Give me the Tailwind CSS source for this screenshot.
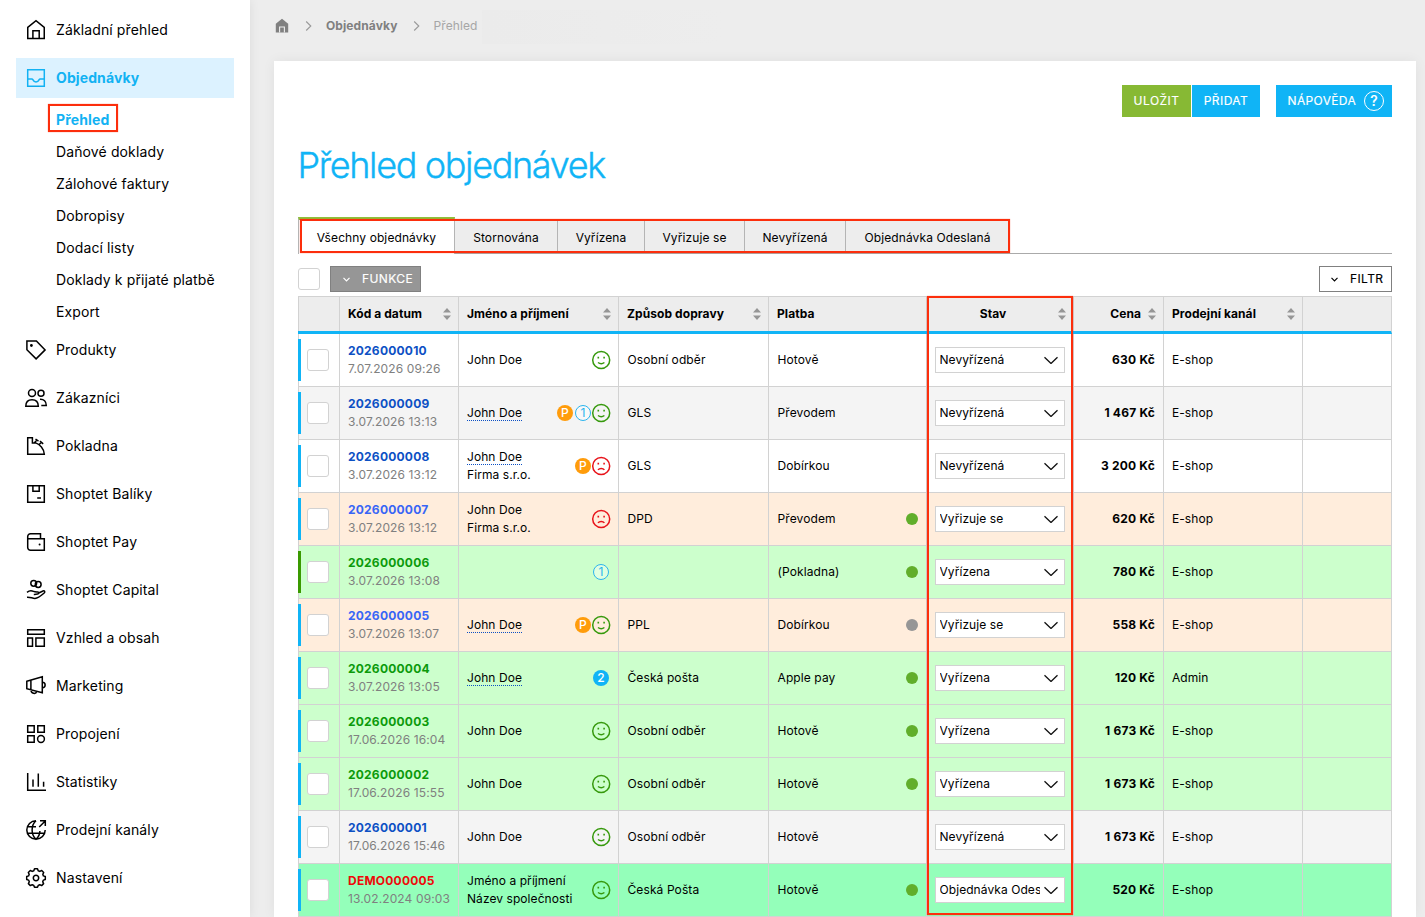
<!DOCTYPE html>
<html lang="cs">
<head>
    <meta charset="UTF-8">
    <meta name="viewport" content="width=device-width, initial-scale=1.0">
    <title>Přehled objednávek</title>
    <script src="https://cdn.jsdelivr.net/npm/@tailwindcss/browser@4"></script>
</head>
<body class="font-['Inter',sans-serif] text-black bg-[#ededed]">
<div class="relative flex w-[1425px] h-[917px] overflow-hidden">

    <!-- Menu -->
    <aside class="relative w-[250px] shrink-0 bg-white px-4 pt-[10px] text-sm tracking-[0.12px] shadow-[0_0_10px_rgba(0,0,0,0.08)]">
        <a class="flex items-center h-10 mb-2 pl-2 gap-2">
            <svg class="size-6" viewBox="0 0 24 24" fill="none" stroke="currentColor" stroke-width="1.5"><path d="M3.75 9.3 12 2.6l8.25 6.7v11.2H3.75zM8.9 20.5v-7.7h6.3v7.7"/></svg>
            <span>Základní přehled</span>
        </a>
        <a class="flex items-center h-10 pl-2 gap-2 bg-[#dcf2ff] text-[#12b2f3] font-bold tracking-[0.1px]">
            <svg class="size-6" viewBox="0 0 24 24" fill="none" stroke="currentColor" stroke-width="1.5"><path d="M3.7 3.7h16.6v16.6H3.7zM3.7 12.9h4.1c.7 0 .9.4 1.2 1 .5 1.2 1.5 2 3 2s2.5-.8 3-2c.3-.6.5-1 1.2-1h4.1"/></svg>
            <span>Objednávky</span>
        </a>
        <nav class="flex flex-col pl-10 mt-[6px] mb-[2px]">
            <a class="relative flex items-center h-8 text-[#12b2f3] font-bold tracking-[0.15px]">Přehled
                <span class="absolute -left-2 top-0 w-[70px] h-[28px] border-2 border-[#fc2e0c] shadow-[0_0_1px_rgba(252,46,12,0.6)]"></span>
            </a>
            <a class="flex items-center h-8">Daňové doklady</a>
            <a class="flex items-center h-8">Zálohové faktury</a>
            <a class="flex items-center h-8">Dobropisy</a>
            <a class="flex items-center h-8">Dodací listy</a>
            <a class="flex items-center h-8 whitespace-nowrap">Doklady k přijaté platbě</a>
            <a class="flex items-center h-8">Export</a>
        </nav>
        <div class="flex flex-col gap-2">
            <a class="flex items-center h-10 pl-2 gap-2">
                <svg class="size-6" viewBox="0 0 24 24" fill="none" stroke="currentColor" stroke-width="1.5"><path d="M2.9 2.9h9.5l8.7 9-9 9-9.2-9.2z"/><circle cx="7.4" cy="7.5" r="1.4" fill="currentColor" stroke="none"/></svg>
                <span>Produkty</span>
            </a>
            <a class="flex items-center h-10 pl-2 gap-2">
                <svg class="size-6" viewBox="0 0 24 24" fill="none" stroke="currentColor" stroke-width="1.5"><circle cx="8" cy="7" r="3.5"/><circle cx="17" cy="7.3" r="3"/><path d="M1.8 20.2c0-4 2.4-6.5 6.2-6.5s6.3 2.5 6.3 6.5zM16 13.2c3.9-.2 6.3 2.1 6.3 6.2h-5"/></svg>
                <span>Zákazníci</span>
            </a>
            <a class="flex items-center h-10 pl-2 gap-2">
                <svg class="size-6" viewBox="0 0 24 24" fill="none" stroke="currentColor" stroke-width="1.5"><path d="M3.7 3.7h4.7v5.2h3.3c4 1.4 8.4 5.6 8.6 11.4H3.7zM10.5 8.8l2.3-2.7M11.5 5l3 2.2M14.8 11l2.5-2.7M16 7.2l3.2 2.6"/></svg>
                <span>Pokladna</span>
            </a>
            <a class="flex items-center h-10 pl-2 gap-2">
                <svg class="size-6" viewBox="0 0 24 24" fill="none" stroke="currentColor" stroke-width="1.5"><path d="M3.7 3.7h16.6v16.6H3.7zM8.9 3.7v5.5h6.3V3.7M13.2 15.9h3.8"/></svg>
                <span>Shoptet Balíky</span>
            </a>
            <a class="flex items-center h-10 pl-2 gap-2">
                <svg class="size-6" viewBox="0 0 24 24" fill="none" stroke="currentColor" stroke-width="1.5"><path d="M16.5 8.7v-5H6.5a2.8 2.8 0 0 0-2.8 2.8v11a2.8 2.8 0 0 0 2.8 2.8h13.8V8.7H3.9"/><circle cx="15.6" cy="14.4" r="1" fill="currentColor" stroke="none"/></svg>
                <span>Shoptet Pay</span>
            </a>
            <a class="flex items-center h-10 pl-2 gap-2">
                <svg class="size-6" viewBox="0 0 24 24" fill="none" stroke="currentColor" stroke-width="1.5"><circle cx="9.7" cy="5.3" r="2.9"/><circle cx="14.2" cy="6.5" r="2.9"/><path d="M3 14.3c2.2-1.7 4.5-1.8 6.5-.9 1.3.6 2.7.5 4.3.5 1.2 0 1.3 1.7 0 2-1.4.4-2.6.6-4 .5M14.7 15l4.3-2c1.6-.6 2.4 1 1.2 2-2.8 2.4-5.8 5.2-9.2 5.4-2.7.1-4.5-1.5-8-1.2"/></svg>
                <span>Shoptet Capital</span>
            </a>
            <a class="flex items-center h-10 pl-2 gap-2">
                <svg class="size-6" viewBox="0 0 24 24" fill="none" stroke="currentColor" stroke-width="1.5"><path d="M3.7 3.7h16.6v4.5H3.7zM3.7 11.9h4.8v8.4H3.7zM11.9 11.9h8.4v8.4h-8.4z"/></svg>
                <span>Vzhled a obsah</span>
            </a>
            <a class="flex items-center h-10 pl-2 gap-2">
                <svg class="size-6" viewBox="0 0 24 24" fill="none" stroke="currentColor" stroke-width="1.5"><path d="M2.8 7.2 18.3 2.8v16L2.8 14.7zM6.9 6.2v9.5M18.3 8.2c3.8.2 3.8 5.5 0 5.7M7 15.8c-.2 4 4.9 4.8 5.8 1.6"/></svg>
                <span>Marketing</span>
            </a>
            <a class="flex items-center h-10 pl-2 gap-2">
                <svg class="size-6" viewBox="0 0 24 24" fill="none" stroke="currentColor" stroke-width="1.5"><path d="M3.7 3.7h6.5v6.5H3.7zM13.8 3.7h6.5v6.5h-6.5zM3.7 13.8h6.5v6.5H3.7z"/><circle cx="17" cy="17" r="3.4"/></svg>
                <span>Propojení</span>
            </a>
            <a class="flex items-center h-10 pl-2 gap-2">
                <svg class="size-6" viewBox="0 0 24 24" fill="none" stroke="currentColor" stroke-width="1.5"><path d="M3.7 3v17.3H22M9 9.5v7.2M14.3 3.5v13.2M19.6 11.7v5"/></svg>
                <span>Statistiky</span>
            </a>
            <a class="flex items-center h-10 pl-2 gap-2">
                <svg class="size-6" viewBox="0 0 24 24" fill="none" stroke="currentColor" stroke-width="1.5"><path d="M12 2.8a9.2 9.2 0 1 0 9.2 9.2M12 2.8c-2.5 2.2-3.9 5.3-3.9 9.2s1.4 7 3.9 9.2c2.5-2.2 3.9-5.3 3.9-8.2M3.8 8.7H12M3.8 15.3h16.4M15.2 9l6-6M16 2.8h5.3V8"/></svg>
                <span>Prodejní kanály</span>
            </a>
            <a class="flex items-center h-10 pl-2 gap-2">
                <svg class="size-6" viewBox="-12 -12 24 24" fill="none" stroke="currentColor" stroke-width="1.5" stroke-linejoin="round"><path d="M-1.5-9.2h3l.7 1.9 1.6.7 1.9-.9 2 2-.9 1.8.6 1.6 1.9.6v3l-1.9.6-.7 1.6.9 1.9-2 2-1.8-.9-1.6.7-.7 1.9h-3l-.7-1.9-1.6-.7-1.8.9-2-2 .9-1.9-.7-1.6-1.9-.6v-3l1.9-.6.6-1.6-.9-1.8 2-2 1.9.9 1.6-.7z"/><circle r="2.7"/></svg>
                <span>Nastavení</span>
            </a>
        </div>
    </aside>

    <main class="flex flex-col flex-1 min-w-0 pl-6 pr-[9px]">
        <!-- Drobečková navigace -->
        <div class="flex items-center h-[61px] pb-[9px] shrink-0 text-xs text-[#a6a6a6]">
            <svg class="w-4 h-4 -mt-px" viewBox="0 0 16 16"><path d="M8 .8 14.2 5.7V14.5H1.8V5.7z" fill="#808080"/><path d="M5.6 14.5V9h4.8v5.500" fill="none" stroke="#ededed" stroke-width="1.1"/></svg>
            <svg class="w-2 h-3 ml-[15px]" viewBox="0 0 8 12" fill="none" stroke="#999" stroke-width="1.1"><path d="M1.2 1.5 5.8 6 1.2 10.5"/></svg>
            <b class="ml-[13px] w-[72px] text-[#808080] tracking-[0.1px]">Objednávky</b>
            <svg class="w-2 h-3 ml-[15px]" viewBox="0 0 8 12" fill="none" stroke="#999" stroke-width="1.1"><path d="M1.2 1.5 5.8 6 1.2 10.5"/></svg>
            <span class="ml-[12.5px] tracking-[0.1px]">Přehled</span>
            <span class="ml-[4px] mt-[2px] w-[240px] h-[34px] bg-linear-to-r from-[#ebebeb] to-[#ededed]"></span>
        </div>

        <section class="flex flex-col flex-1 bg-white px-6 pt-6 shadow-[0_0_12px_rgba(0,0,0,0.06)]">
            <div class="flex justify-end h-8 shrink-0 text-xs text-white tracking-[0.45px] [-webkit-text-stroke:0.15px]">
                <button class="w-[69px] bg-[#87b934] mr-px">ULOŽIT</button>
                <button class="w-[68px] bg-[#10b4f6]">PŘIDAT</button>
                <button class="flex items-center w-[116px] bg-[#10b4f6] ml-4 pl-[11.5px] pr-2 justify-between">
                    <span class="tracking-[0.35px]">NÁPOVĚDA</span>
                    <span class="flex items-center justify-center size-5 shrink-0 rounded-full border-[1.5px] border-white text-sm font-medium tracking-normal">?</span>
                </button>
            </div>
            <h1 class="mt-6 h-12 shrink-0 text-4xl leading-[48px] font-light text-[#10b4f6] tracking-[-1.35px] [-webkit-text-stroke:0.4px] -ml-[0.5px]">Přehled objednávek</h1>

            <div class="relative flex items-stretch h-[37px] mt-7 shrink-0 border-b border-[#aaa] text-xs tracking-[0.1px]">
                <a class="flex items-center justify-center w-[157px] h-[37px] pt-[2px] bg-white border-t-3 border-t-[#8fc03a] border-x border-x-[#b4b4b4]">Všechny objednávky</a>
                <a class="flex items-center justify-center w-[103px] pt-[3px] mt-[3px] bg-[#ededed] border-r border-[#b4b4b4]">Stornována</a>
                <a class="flex items-center justify-center w-[87px] pt-[3px] mt-[3px] bg-[#ededed] border-r border-[#b4b4b4]">Vyřízena</a>
                <a class="flex items-center justify-center w-[100px] pt-[3px] mt-[3px] bg-[#ededed] border-r border-[#b4b4b4]">Vyřizuje se</a>
                <a class="flex items-center justify-center w-[101px] pt-[3px] mt-[3px] bg-[#ededed] border-r border-[#b4b4b4]">Nevyřízená</a>
                <a class="flex items-center justify-center w-[163px] pt-[3px] mt-[3px] bg-[#ededed]">Objednávka Odeslaná</a>
                <span class="absolute left-[2px] top-[2px] w-[710px] h-[34px] border-2 border-[#fc2e0c] shadow-[0_0_1px_rgba(252,46,12,0.6)]"></span>
            </div>

            <div class="flex items-center h-[26px] mt-3 mb-1 shrink-0 text-xs tracking-[0.4px] [-webkit-text-stroke:0.15px]">
                <span class="size-[22px] border border-[#d2d2d2] rounded-[3px] bg-white"></span>
                <button class="flex items-center w-[91px] h-[26px] ml-[10px] pl-3 bg-[#969696] border border-[#808080] text-white">
                    <svg class="w-[7px] h-[5px] mr-3" viewBox="0 0 7 5" fill="none" stroke="currentColor" stroke-width="1.2"><path d="M.5.8 3.5 3.8 6.5.8"/></svg>FUNKCE
                </button>
                <button class="flex items-center w-[73px] h-[26px] ml-auto pl-[11px] bg-white border border-[#808080]">
                    <svg class="w-[7px] h-[5px] mr-3" viewBox="0 0 7 5" fill="none" stroke="currentColor" stroke-width="1.2"><path d="M.5.8 3.5 3.8 6.5.8"/></svg>FILTR
                </button>
            </div>

            <!-- Tabulka objednávek -->
            <div class="relative w-[1094px] text-xs leading-[18px]">
                <div id="head" class="grid grid-cols-[41px_119px_160px_150px_158px_147px_90px_139px_89px] h-[38px] bg-[#ededed] border-t border-r border-[#d2d2d2] border-b-3 border-b-[#10b4f6] font-bold tracking-[0.08px]"></div>
                <div id="orders"></div>
                <span class="absolute left-[629px] top-0 w-[146px] h-[619px] border-2 border-[#fc2e0c] shadow-[0_0_1px_rgba(252,46,12,0.6)]"></span>
            </div>
        </section>
    </main>
</div>

<script>
    const columns = [
        ['', '', false],
        ['Kód a datum', '', true],
        ['Jméno a příjmení', '', true],
        ['Způsob dopravy', '', true],
        ['Platba', '', false],
        ['Stav', 'text-center', true],
        ['Cena', 'text-right', true],
        ['Prodejní kanál', '', true],
        ['', '', false],
    ];

    const blue = 'text-[#0c50c4]', light = 'text-[#3865f6]', green = 'text-[#0b9a0b]', red = 'text-[#ee0a0a]';
    const white = 'bg-white', gray = 'bg-[#f4f4f4]', peach = 'bg-[#ffeddc]', mint = 'bg-[#ccffcc]', teal = 'bg-[#94ffba]';
    const ok = 'bg-[#61ae2b]', off = 'bg-[#969696]';

    // pozadí, barva kódu, kód, datum, jméno, tečkované podtržení, firma, ikony, doprava, platba, tečka, stav, cena, kanál
    const orders = [
        [white, blue, '2026000010', '7.07.2026 09:26', 'John Doe', false, '', 's', 'Osobní odběr', 'Hotově', '', 'Nevyřízená', '630 Kč', 'E-shop'],
        [gray, blue, '2026000009', '3.07.2026 13:13', 'John Doe', true, '', 'P1s', 'GLS', 'Převodem', '', 'Nevyřízená', '1 467 Kč', 'E-shop'],
        [white, blue, '2026000008', '3.07.2026 13:12', 'John Doe', true, 'Firma s.r.o.', 'Px', 'GLS', 'Dobírkou', '', 'Nevyřízená', '3 200 Kč', 'E-shop'],
        [peach, light, '2026000007', '3.07.2026 13:12', 'John Doe', false, 'Firma s.r.o.', 'x', 'DPD', 'Převodem', ok, 'Vyřizuje se', '620 Kč', 'E-shop'],
        [mint, green, '2026000006', '3.07.2026 13:08', '', false, '', '1', '', '(Pokladna)', ok, 'Vyřízena', '780 Kč', 'E-shop'],
        [peach, light, '2026000005', '3.07.2026 13:07', 'John Doe', true, '', 'Ps', 'PPL', 'Dobírkou', off, 'Vyřizuje se', '558 Kč', 'E-shop'],
        [mint, green, '2026000004', '3.07.2026 13:05', 'John Doe', true, '', '2', 'Česká pošta', 'Apple pay', ok, 'Vyřízena', '120 Kč', 'Admin'],
        [mint, green, '2026000003', '17.06.2026 16:04', 'John Doe', false, '', 's', 'Osobní odběr', 'Hotově', ok, 'Vyřízena', '1 673 Kč', 'E-shop'],
        [mint, green, '2026000002', '17.06.2026 15:55', 'John Doe', false, '', 's', 'Osobní odběr', 'Hotově', ok, 'Vyřízena', '1 673 Kč', 'E-shop'],
        [gray, blue, '2026000001', '17.06.2026 15:46', 'John Doe', false, '', 's', 'Osobní odběr', 'Hotově', '', 'Nevyřízená', '1 673 Kč', 'E-shop'],
        [teal, red, 'DEMO000005', '13.02.2024 09:03', 'Jméno a příjmení', false, 'Název společnosti', 's', 'Česká Pošta', 'Hotově', ok, 'Objednávka Odeslaná', '520 Kč', 'E-shop'],
    ];

    const icons = {
        s: '<svg class="size-5 -ml-[2px] -mr-px" viewBox="-.5 -.5 20 20" fill="none" stroke="#36990c" stroke-width="1.5"><circle cx="9.7" cy="9.5" r="8.5"/><path d="M6.5 12c1.8 1.4 4.600 1.400 6.400 0"/><path d="M6.800 6.300v1.700M12.600 6.300v1.700" stroke-width="1.6"/></svg>',
        x: '<svg class="size-5 -ml-[2px] -mr-px" viewBox="-.5 -.5 20 20" fill="none" stroke="#e8131a" stroke-width="1.5"><circle cx="9.7" cy="9.5" r="8.5"/><path d="M6.500 13.400c1.500-2 4.900-2 6.400 0"/><path d="M6.800 6.300v1.700M12.600 6.300v1.700" stroke-width="1.6"/></svg>',
        P: '<span class="flex items-center justify-center size-4 mr-px rounded-full bg-[#ff9c0b] text-white text-xs font-medium">P</span>',
        1: '<span class="flex items-center justify-center size-4 mr-px rounded-full border border-[#2bb4ee] bg-white/40 text-[#2bb4ee] text-xs">1</span>',
        2: '<span class="flex items-center justify-center size-4 mr-px rounded-full bg-[#10b4f6] text-white text-xs font-medium">2</span>',
    };

    const sort = '<svg class="w-2 h-3 shrink-0" viewBox="0 0 8 12" fill="#969696"><path d="M0 4.5 4 0 8 4.5zM0 7.5 4 12 8 7.5z"/></svg>';

    document.getElementById('head').innerHTML = columns.map(([name, align, sortable]) => `
        <div class="flex items-center border-l border-[#d2d2d2] pl-2 pr-[7px] gap-[7px]">
            <span class="flex-1 whitespace-nowrap ${align}">${name}</span>${sortable ? sort : ''}
        </div>`).join('');

    document.getElementById('orders').innerHTML = orders.map(([bg, color, code, date, name, dotted, company, marks, shipping, payment, dot, state, price, channel]) => `
        <div class="relative grid grid-cols-[41px_119px_160px_150px_158px_147px_90px_139px_89px] h-[53px] border-b border-r border-[#d2d2d2] tracking-[0.07px] ${bg}">
            <span class="absolute left-0 top-[5px] w-[3px] h-[42px] ${code === '2026000006' ? 'bg-[#3a9a00]' : 'bg-[#10b4f6]'}"></span>
            <div class="flex items-center border-l border-[#d2d2d2] pl-2"><span class="size-[22px] border border-[#d2d2d2] rounded-[3px] bg-white"></span></div>
            <div class="border-l border-[#d2d2d2] pl-2 pt-2 whitespace-nowrap">
                <div class="font-bold tracking-[0.22px] ${color}">${code}</div>
                <div class="text-[#808080] tracking-[0.12px]">${date}</div>
            </div>
            <div class="flex items-center justify-between border-l border-[#d2d2d2] px-2">
                <div class="whitespace-nowrap">
                    <div><span class="${dotted ? 'border-b border-dotted border-[#0c50c4]' : ''}">${name}</span></div>
                    ${company ? `<div>${company}</div>` : ''}
                </div>
                <div class="flex items-center gap-px">${[...marks].map(m => icons[m]).join('')}</div>
            </div>
            <div class="flex items-center border-l border-[#d2d2d2] pl-[8.5px] tracking-[0.1px]">${shipping}</div>
            <div class="flex items-center justify-between border-l border-[#d2d2d2] pl-[8.5px] pr-2 tracking-[0.1px]">${payment}${dot ? `<span class="size-3 rounded-full ${dot}"></span>` : ''}</div>
            <div class="flex items-center border-l border-[#d2d2d2] pl-2">
                <div class="flex items-center w-[130px] h-[26px] bg-white border border-[#d2d2d2] pl-[3.5px]">
                    <span class="w-[100.5px] overflow-hidden whitespace-nowrap">${state}</span>
                    <svg class="w-[14px] h-2 ml-1" viewBox="0 0 14 8" fill="none" stroke="#111" stroke-width="1.3"><path d="M.5 1.2 7 7.5 13.5 1.2"/></svg>
                </div>
            </div>
            <div class="flex items-center justify-end border-l border-[#d2d2d2] pr-2 font-bold tracking-[0.2px]">${price}</div>
            <div class="flex items-center border-l border-[#d2d2d2] pl-2">${channel}</div>
            <div class="border-l border-[#d2d2d2]"></div>
        </div>`).join('');
</script>
</body>
</html>
